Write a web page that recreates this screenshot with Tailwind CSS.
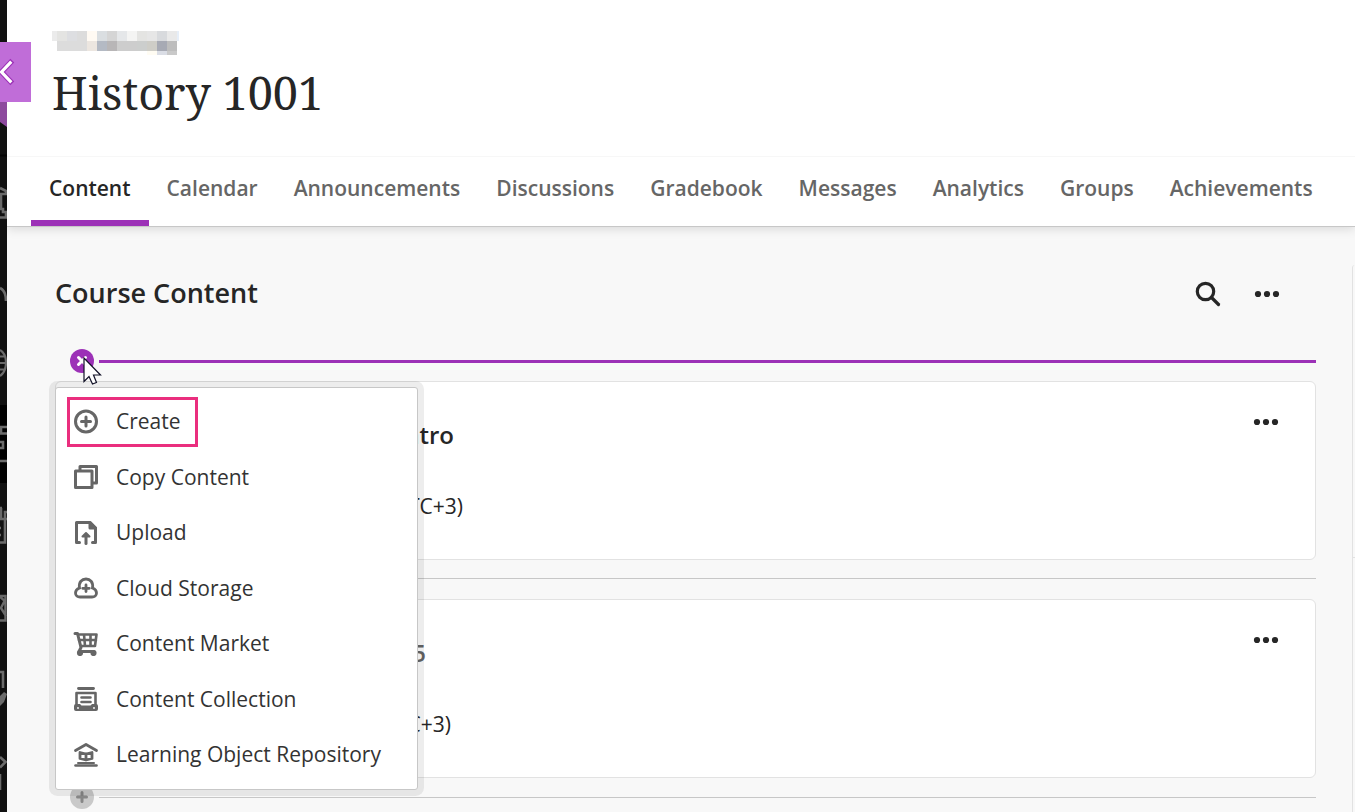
<!DOCTYPE html>
<html lang="en">
<head>
  <meta charset="UTF-8" />
  <meta name="viewport" content="width=device-width, initial-scale=1.0" />
  <title>History 1001</title>
  <script src="https://cdn.jsdelivr.net/npm/@tailwindcss/browser@4"></script>
</head>
<body class="bg-[#f8f8f8] text-[#262626] font-['Open_Sans',sans-serif] h-screen overflow-hidden">
  <div class="flex h-full">

    <!-- Dark rail, only its edge is showing -->
    <aside class="relative w-[7px] shrink-0 bg-[#111] z-30">
      <svg class="block w-[7px] h-[812px]" viewBox="0 0 7 812" fill="none" stroke="#6b6b6b" stroke-width="2.600">
        <path d="M0 102H7V127L0 122Z" fill="#8d4a9e" stroke="none" />
        <path d="M0 155.500H7" stroke="#060606" stroke-width="2" />
        <path d="M0 188L6 191V194H0M1 194V209M0 209H3V212H7M0 217.500H6V212" />
        <path d="M0 288C4 290 6 295 6 301" />
        <path d="M0 350C8 355 8 370 0 376M0 356.500H5M0 363H7M0 369.500H5" stroke-width="2.200" />
        <rect y="405" width="7" height="78" fill="#000" stroke="none" />
        <path d="M7 427H1V433.500H7M0 442H3V448H0M0 461H7" />
        <path d="M0 508H2M1 508V519M7 512H5V542.500H0M0 519H7M0 528H1M0 535H1" />
        <path d="M0 596H5.500V620.500H0M0 597L5 601M5 600L1 608L6 616" stroke-width="2.400" />
        <path d="M0 672H3V688" />
        <path d="M0 696L4 692L7 694L4 702L0 706Z" fill="#6b6b6b" stroke="none" />
        <path d="M0 757L5.500 762L0 767.500M0 774V790" />
      </svg>
      <button aria-label="Close course" class="absolute left-0 top-[42px] w-[31px] h-[60px] bg-[#c06dd8]">
        <svg class="absolute left-0 top-[15px] w-[16px] h-[30px]" viewBox="0 0 16 30" fill="none">
          <path d="M12.300 3.700L1.500 15L12.300 26.300" stroke="#9c31b7" stroke-width="5.400" />
          <path d="M11.300 4.700L1.500 15L11.300 25.300" stroke="#fff" stroke-width="3.200" />
        </svg>
      </button>
    </aside>

    <div class="flex-1 min-w-0 flex flex-col">
      <header class="relative z-10 bg-white border-b border-[#c7c7c7] shadow-[0_2px_10px_rgba(0,0,0,0.13)]">
        <div class="h-[156px] pt-[31px] pl-[45px]">
          <svg class="block w-[127px] h-[24px]" viewBox="0 0 127 24" shape-rendering="crispEdges">
            <path d="M0 0h5v10H0z" fill="#ebebeb" />
            <path d="M5 0h10v10H5z" fill="#e4e4e2" />
            <path d="M15 0h10v10H15z" fill="#dddee1" />
            <path d="M25 0h10v10H25z" fill="#dcdcdc" />
            <path d="M35 0h10v10H35z" fill="#fffaf3" />
            <path d="M45 0h10v10H45z" fill="#dadee1" />
            <path d="M55 0h10v10H55z" fill="#d5d5d5" />
            <path d="M65 0h10v10H65z" fill="#e5e7e9" />
            <path d="M75 0h10v10H75z" fill="#f4f4f3" />
            <path d="M85 0h10v10H85z" fill="#e4e4e2" />
            <path d="M95 0h10v10H95z" fill="#e6e6e6" />
            <path d="M105 0h10v10H105z" fill="#d8dadd" />
            <path d="M115 0h10v10H115z" fill="#e9e9e9" />
            <path d="M125 0h2v10H125z" fill="#e6eef8" />
            <path d="M5 10h30v10H5z" fill="#dcdcdc" />
            <path d="M35 10h10v10H35z" fill="#ece6e0" />
            <path d="M45 10h10v10H45z" fill="#b4bac4" />
            <path d="M55 10h10v10H55z" fill="#b8b6b7" />
            <path d="M65 10h20v10H65z" fill="#cdcdcd" />
            <path d="M85 10h10v10H85z" fill="#cccecd" />
            <path d="M95 10h10v10H95z" fill="#cecdc7" />
            <path d="M105 10h10v10H105z" fill="#a7aab4" />
            <path d="M115 10h10v10H115z" fill="#bdbdbd" />
            <path d="M95 20h10v4H95z" fill="#fffcf3" />
            <path d="M105 20h10v4H105z" fill="#dadde5" />
            <path d="M115 20h10v4H115z" fill="#c9c9c9" />
          </svg>
          <h1 class="mt-[8px] text-[45px] leading-[60px] font-['Noto_Serif','Droid_Serif','DejaVu_Serif',serif]">History 1001</h1>
        </div>
        <nav class="flex border-t border-[#f7f7f7] pl-[24px] text-[21px] leading-[28px] font-semibold text-[#666] whitespace-nowrap">
          <a href="#" class="px-[18px] pt-[17px] pb-[18px] border-b-6 border-[#9c31b7] text-[#262626]">Content</a>
          <a href="#" class="px-[18px] pt-[17px]">Calendar</a>
          <a href="#" class="px-[18px] pt-[17px]">Announcements</a>
          <a href="#" class="px-[18px] pt-[17px]">Discussions</a>
          <a href="#" class="px-[18px] pt-[17px]">Gradebook</a>
          <a href="#" class="px-[18px] pt-[17px]">Messages</a>
          <a href="#" class="px-[18px] pt-[17px]">Analytics</a>
          <a href="#" class="px-[18px] pt-[17px]">Groups</a>
          <a href="#" class="px-[18px] pt-[17px]">Achievements</a>
        </nav>
      </header>

      <div class="flex flex-1 min-h-0">
        <main class="flex-1 min-w-0 pl-[48px] pr-[36px]">
          <div class="flex items-center pt-[43px] pr-[36px]">
            <h2 class="flex-1 pb-[2px] text-[27px] leading-[46px] font-semibold">Course Content</h2>
            <button aria-label="Search" class="mr-[33px]">
              <svg class="block w-[26px] h-[26px]" viewBox="0 0 26 26" fill="none" stroke="#262626" stroke-width="3.200">
                <circle cx="10.500" cy="10.500" r="8.200" />
                <path d="M16.500 16.500L23.500 23.500" stroke-linecap="round" />
              </svg>
            </button>
            <button aria-label="More options">
              <svg class="block w-[26px] h-[8px]" viewBox="0 0 26 8" fill="#262626"><circle cx="4" cy="4" r="3.100" /><circle cx="13" cy="4" r="3.100" /><circle cx="22" cy="4" r="3.100" /></svg>
            </button>
          </div>

          <!-- Insert point with the open menu -->
          <div class="relative mt-[31px] h-[24px] flex items-center gap-[5px] pl-[15px]">
            <button aria-label="Close menu" class="w-6 h-6 rounded-full bg-[#9c31b7]">
              <svg class="block w-6 h-6" viewBox="0 0 24 24" stroke="#fff" stroke-width="3" stroke-linecap="round"><path d="M8.500 8.500L15.500 15.500M15.500 8.500L8.500 15.500" /></svg>
            </button>
            <div class="flex-1 h-[3px] bg-[#9c31b7]"></div>

            <ul class="absolute z-20 left-0 top-[38px] w-[363px] pt-[5px] pb-[7px] bg-white border border-[#c7c7c7] rounded-[3px] shadow-[0_0_0_6px_rgba(0,0,0,0.07)] text-[21px] leading-[28px] text-[#333]">
              <li class="relative">
                <button class="w-full h-[56px] pl-[17px] flex items-center gap-[17px]">
                  <svg class="w-[26px] h-[26px]" viewBox="0 0 26 26" fill="none" stroke="#666" stroke-width="3"><circle cx="13" cy="13.500" r="10.500" /><path d="M13 9V18M8.500 13.500H17.500" stroke-linecap="round" /></svg>
                  Create
                </button>
                <span class="absolute left-[11px] top-[4px] w-[131px] h-[50px] border-3 border-[#ea2e7e]"></span>
              </li>
              <li>
                <button class="w-full h-[55px] pl-[17px] flex items-center gap-[17px]">
                  <svg class="w-[26px] h-[26px]" viewBox="0 0 26 26" fill="none" stroke="#666" stroke-width="3" stroke-linejoin="round"><path d="M2.500 7H19V23.500H2.500Z" /><path d="M7 6V2.500H23.500V19H20" /></svg>
                  Copy Content
                </button>
              </li>
              <li>
                <button class="w-full h-[56px] pl-[17px] flex items-center gap-[17px]">
                  <svg class="w-[26px] h-[26px]" viewBox="0 0 26 26" fill="none" stroke="#666" stroke-width="3" stroke-linecap="round" stroke-linejoin="round"><path d="M6.500 23.500H3.500V3.500H17L22.500 9V23.500H19.500" /><path d="M17 3.500V9H22.500Z" fill="#666" /><path d="M13 24.500V16" /><path d="M9.500 17.500L13 14L16.500 17.500Z" fill="#666" stroke-width="2" /></svg>
                  Upload
                </button>
              </li>
              <li>
                <button class="w-full h-[55px] pl-[17px] flex items-center gap-[17px]">
                  <svg class="w-[26px] h-[26px]" viewBox="0 0 26 26" fill="none" stroke="#666" stroke-width="2.800" stroke-linecap="round"><path d="M6.500 13C5.500 7 9 4 13 4C17 4 20.500 7 19.500 13C22 14 23.500 15.500 23.500 18C23.500 20.500 21.500 22 19 22H7C4.500 22 2.500 20.500 2.500 18C2.500 15.500 4 14 6.500 13Z" /><path d="M13 10V16.500M9.700 13.300H16.300" /></svg>
                  Cloud Storage
                </button>
              </li>
              <li>
                <button class="w-full h-[56px] pl-[17px] flex items-center gap-[17px]">
                  <svg class="w-[26px] h-[26px]" viewBox="0 0 26 26" fill="none" stroke="#666" stroke-width="2.600" stroke-linecap="round" stroke-linejoin="round"><path d="M2 3.500H4.500L8 17.500L6 21.500H21" stroke-width="3" /><path d="M5 4.500H23.500L22 16H8M6 10H23M11 4.500L12 16M17.500 4.500V16" /><circle cx="7" cy="23" r="1.800" fill="#666" /><circle cx="20.500" cy="23" r="1.800" fill="#666" /></svg>
                  Content Market
                </button>
              </li>
              <li>
                <button class="w-full h-[55px] pl-[17px] flex items-center gap-[17px]">
                  <svg class="w-[26px] h-[26px]" viewBox="0 0 26 26" fill="none" stroke="#666" stroke-width="2.600" stroke-linecap="round" stroke-linejoin="round"><path d="M5.500 2.500H20.500" stroke-width="2.800" /><path d="M3.500 19V7H22.500V19" /><path d="M8.500 11.500H17.500M8.500 16H17.500" /><path d="M1 20Q1 18 3 18H7L8.500 19.500H17.500L19 18H23Q25 18 25 20V23Q25 25 23 25H3Q1 25 1 23Z" fill="#666" stroke="none" /><circle cx="5" cy="22" r="0.900" fill="#fff" stroke="none" /><circle cx="21" cy="22" r="0.900" fill="#fff" stroke="none" /></svg>
                  Content Collection
                </button>
              </li>
              <li>
                <button class="w-full h-[56px] pl-[17px] flex items-center gap-[17px]">
                  <svg class="w-[26px] h-[26px]" viewBox="0 0 26 26" fill="none" stroke="#666" stroke-width="2.800" stroke-linecap="round" stroke-linejoin="round"><path d="M2.500 9.500L13 3.500L23.500 9.500" /><path d="M7 11.500L13 13L19 11.500V17.500L13 19L7 17.500ZM13 13V19" /><path d="M5 22H21" stroke-width="2" /><path d="M2.500 24.500H23.500" stroke-width="2.600" /></svg>
                  Learning Object Repository
                </button>
              </li>
            </ul>

            <!-- Mouse pointer -->
            <svg class="absolute z-30 left-[28px] top-[8px] w-[19px] h-[28px]" viewBox="0 0 19 28"><path d="M1 1V24.500L6 19.500L9.500 27L13.500 25.500L10.500 18H17.500Z" fill="#fff" stroke="#111127" stroke-width="1.200" /></svg>
          </div>

          <article class="relative mt-[8px] h-[179px] bg-white border border-[#e2e2e2] rounded-[6px] pt-[38px]">
            <h3 class="w-[398px] text-right text-[24px] leading-[30px] font-semibold">Intro</h3>
            <p class="w-[407px] mt-[42px] text-right text-[21px] leading-[28px]">(UTC+3)</p>
            <button aria-label="More options for Intro" class="absolute right-[36px] top-[36px]">
              <svg class="block w-[26px] h-[8px]" viewBox="0 0 26 8" fill="#262626"><circle cx="4" cy="4" r="3.100" /><circle cx="13" cy="4" r="3.100" /><circle cx="22" cy="4" r="3.100" /></svg>
            </button>
          </article>
          <hr class="mt-[18px] mb-[20px] border-[#c7c7c7]" />
          <article class="relative h-[179px] bg-white border border-[#e2e2e2] rounded-[6px] pt-[38px]">
            <h3 class="w-[370px] text-right text-[24px] leading-[30px] font-semibold text-[#666]">5</h3>
            <p class="w-[395px] mt-[42px] text-right text-[21px] leading-[28px]">(UTC+3)</p>
            <button aria-label="More options" class="absolute right-[36px] top-[36px]">
              <svg class="block w-[26px] h-[8px]" viewBox="0 0 26 8" fill="#262626"><circle cx="4" cy="4" r="3.100" /><circle cx="13" cy="4" r="3.100" /><circle cx="22" cy="4" r="3.100" /></svg>
            </button>
          </article>
          <div class="mt-[7px] h-[24px] flex items-center gap-[5px] pl-[15px]">
            <button aria-label="Add content" class="w-6 h-6 rounded-full bg-[#c9c9c9]">
              <svg class="block w-6 h-6" viewBox="0 0 24 24" stroke="#868686" stroke-width="3" stroke-linecap="round"><path d="M12 7.500V16.500M7.500 12H16.500" /></svg>
            </button>
            <hr class="flex-1 border-[#c7c7c7]" />
          </div>
        </main>

        <!-- Details panel, cut off by the window -->
        <aside class="w-[3px] mt-[38px] border-l border-[#e2e2e2] rounded-tl-[6px]">
          <div class="h-[293px] border-b border-[#e2e2e2]"></div>
        </aside>
      </div>
    </div>
  </div>
</body>
</html>
